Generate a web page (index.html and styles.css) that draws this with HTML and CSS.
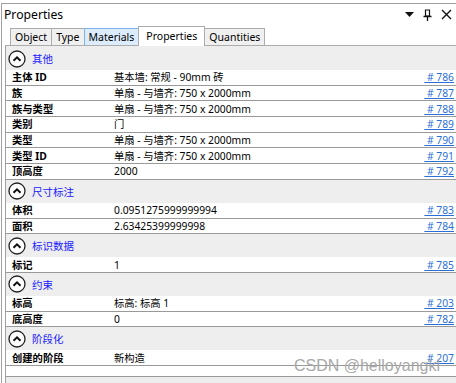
FILE: index.html
```html
<!DOCTYPE html>
<html lang="zh-CN">
<head>
    <meta charset="UTF-8">
    <title>Properties</title>
    <link rel="stylesheet" href="styles.css">
</head>
<body>
    <div class="window">
        <div class="titlebar">
            <span class="title">Properties</span>
            <div class="title-tools">
                <svg width="9" height="6" viewBox="0 0 9 6"><path d="M0 0 H9 L4.5 5 Z" fill="#111"/></svg>
                <svg width="9" height="12" viewBox="0 0 9 12"><path d="M2.5 1 H6.5 V7 H2.5 Z M6.5 1 V7" fill="none" stroke="#111" stroke-width="1.2"/><path d="M0.5 7.5 H8.5 M4.5 7.5 V12" stroke="#111" stroke-width="1.3"/></svg>
                <svg width="11" height="11" viewBox="0 0 11 11"><path d="M1 1 L10 10 M10 1 L1 10" stroke="#111" stroke-width="1.4"/></svg>
            </div>
        </div>

        <div class="tabs">
            <div class="tab">Object</div>
            <div class="tab">Type</div>
            <div class="tab hover">Materials</div>
            <div class="tab active">Properties</div>
            <div class="tab">Quantities</div>
        </div>

        <div class="panel">
            <div class="group">
                <span class="toggle"><svg width="18" height="18" viewBox="0 0 18 18"><circle cx="9" cy="9" r="8" fill="#fff" stroke="#222" stroke-width="1.3"/><path d="M5.5 10.8 L9 7.3 L12.5 10.8" fill="none" stroke="#111" stroke-width="2"/></svg></span>
                <span class="group-name">其他</span>
            </div>
            <div class="row"><span class="name">主体 ID</span><span class="value">基本墙: 常规 - 90mm 砖</span><a class="ref"> # 786</a></div>
            <div class="row"><span class="name">族</span><span class="value">单扇 - 与墙齐: 750 x 2000mm</span><a class="ref"> # 787</a></div>
            <div class="row"><span class="name">族与类型</span><span class="value">单扇 - 与墙齐: 750 x 2000mm</span><a class="ref"> # 788</a></div>
            <div class="row"><span class="name">类别</span><span class="value">门</span><a class="ref"> # 789</a></div>
            <div class="row"><span class="name">类型</span><span class="value">单扇 - 与墙齐: 750 x 2000mm</span><a class="ref"> # 790</a></div>
            <div class="row"><span class="name">类型 ID</span><span class="value">单扇 - 与墙齐: 750 x 2000mm</span><a class="ref"> # 791</a></div>
            <div class="row"><span class="name">顶高度</span><span class="value">2000</span><a class="ref"> # 792</a></div>

            <div class="group">
                <span class="toggle"><svg width="18" height="18" viewBox="0 0 18 18"><circle cx="9" cy="9" r="8" fill="#fff" stroke="#222" stroke-width="1.3"/><path d="M5.5 10.8 L9 7.3 L12.5 10.8" fill="none" stroke="#111" stroke-width="2"/></svg></span>
                <span class="group-name">尺寸标注</span>
            </div>
            <div class="row"><span class="name">体积</span><span class="value">0.0951275999999994</span><a class="ref"> # 783</a></div>
            <div class="row"><span class="name">面积</span><span class="value">2.63425399999998</span><a class="ref"> # 784</a></div>

            <div class="group">
                <span class="toggle"><svg width="18" height="18" viewBox="0 0 18 18"><circle cx="9" cy="9" r="8" fill="#fff" stroke="#222" stroke-width="1.3"/><path d="M5.5 10.8 L9 7.3 L12.5 10.8" fill="none" stroke="#111" stroke-width="2"/></svg></span>
                <span class="group-name">标识数据</span>
            </div>
            <div class="row"><span class="name">标记</span><span class="value">1</span><a class="ref"> # 785</a></div>

            <div class="group">
                <span class="toggle"><svg width="18" height="18" viewBox="0 0 18 18"><circle cx="9" cy="9" r="8" fill="#fff" stroke="#222" stroke-width="1.3"/><path d="M5.5 10.8 L9 7.3 L12.5 10.8" fill="none" stroke="#111" stroke-width="2"/></svg></span>
                <span class="group-name">约束</span>
            </div>
            <div class="row"><span class="name">标高</span><span class="value">标高: 标高 1</span><a class="ref"> # 203</a></div>
            <div class="row"><span class="name">底高度</span><span class="value">0</span><a class="ref"> # 782</a></div>

            <div class="group">
                <span class="toggle"><svg width="18" height="18" viewBox="0 0 18 18"><circle cx="9" cy="9" r="8" fill="#fff" stroke="#222" stroke-width="1.3"/><path d="M5.5 10.8 L9 7.3 L12.5 10.8" fill="none" stroke="#111" stroke-width="2"/></svg></span>
                <span class="group-name">阶段化</span>
            </div>
            <div class="row"><span class="name">创建的阶段</span><span class="value">新构造</span><a class="ref"> # 207</a></div>
            <div class="row short"></div>
        </div>

        <div class="watermark">CSDN @helloyangkl</div>
    </div>
</body>
</html>
```

FILE: styles.css
```css
body {
    margin: 0;
    background: #fff;
    font-family: "Noto Sans", "Noto Sans CJK SC", sans-serif;
    font-size: 10.3px;
    color: #000;
    overflow: hidden;
}
.window {
    position: relative;
    margin: 3px 0 0 1px;
    height: 380px;
    border-top: 1px solid #a0a0a0;
    border-left: 1px solid #a0a0a0;
    box-sizing: border-box;
}
.titlebar {
    display: flex;
    align-items: center;
    justify-content: space-between;
    height: 21px;
    padding: 0 4px 0 2px;
}
.title {
    font-size: 12.2px;
}
.title-tools {
    display: flex;
    align-items: center;
    gap: 9px;
}
.tabs {
    display: flex;
    align-items: flex-end;
    height: 20px;
    padding-left: 8px;
}
.tab {
    height: 17px;
    line-height: 16px;
    padding: 0 4px;
    font-size: 10.5px;
    background: #f0f0f0;
    border: 1px solid #acacac;
    border-bottom: none;
    border-right: none;
    box-sizing: border-box;
}
.tab:last-child {
    border-right: 1px solid #acacac;
}
.tab.hover {
    background: #dcecfc;
    border-color: #7eb4ea;
}
.tab.active {
    height: 20px;
    line-height: 18px;
    padding: 0 7px;
    background: #fff;
    border-right: 1px solid #acacac;
    margin-bottom: -1px;
    position: relative;
}
.tab.active + .tab {
    border-left: none;
}
.panel {
    margin-left: 3px;
    padding-top: 1px;
    background: #eeeeee;
    border-top: 1px solid #acacac;
    border-left: 1px solid #a0a0a0;
    height: 340px;
}
.group {
    display: flex;
    align-items: center;
    height: 23px;
    padding-left: 2px;
}
.toggle {
    display: flex;
    width: 18px;
    height: 18px;
}
.group-name {
    margin-left: 6px;
    font-size: 10.5px;
    color: #2020ff;
}
.row {
    display: grid;
    grid-template-columns: 102px 1fr auto;
    align-items: center;
    height: 15.7px;
    padding: 0 2px 0 6px;
    background: #fff;
    border-bottom: 1px solid #999;
    box-sizing: border-box;
    line-height: 14px;
    white-space: nowrap;
}
.row.short {
    height: 11px;
}
.name {
    font-weight: bold;
}
.ref {
    color: #2a6fd6;
    text-decoration: underline;
    white-space: pre;
}
.watermark {
    position: absolute;
    right: 16px;
    bottom: 8px;
    font-family: "Liberation Sans", sans-serif;
    font-size: 16px;
    color: #a8a8a8;
}
```
